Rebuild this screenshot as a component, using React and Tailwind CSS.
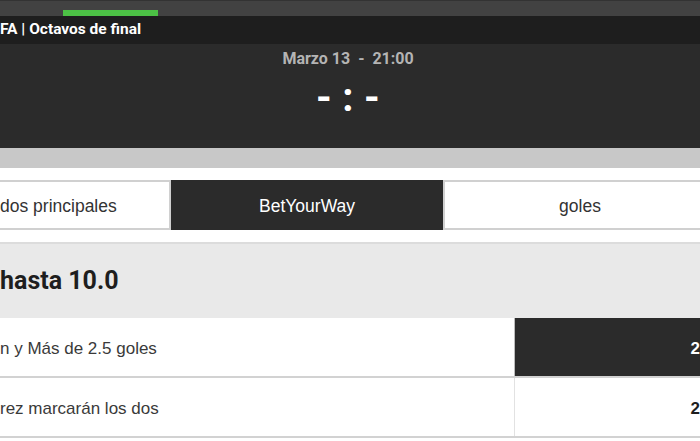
export default function App() {
  const rows = [
    { label: 'n y Más de 2.5 goles', odd: '2', active: true },
    { label: 'rez marcarán los dos', odd: '2', active: false },
  ];

  return (
    <div className="w-[700px] h-[441px] overflow-hidden bg-white font-['Liberation_Sans',Arial,sans-serif]">
      {/* barra superior */}
      <div className="h-4 bg-[#424242] border-t border-[#333]">
        <div className="ml-[63px] mt-[9px] h-[6px] w-[95px] bg-[#4cc145]" />
      </div>

      <div className="h-7 bg-[#1e1e1e] flex items-center font-['Roboto',sans-serif] font-bold text-[15.5px] text-white whitespace-nowrap">
        FA | Octavos de final
      </div>

      <div className="h-[104px] bg-[#2b2b2b] flex flex-col items-center pr-1 font-['Roboto',sans-serif] font-bold">
        <div className="mt-[3px] text-[16px] text-[#b4b4b4] whitespace-pre">Marzo 13  -  21:00</div>
        <div className="mt-[7px] flex text-[40px] leading-none text-white">
          <span className="w-6 text-center">-</span>
          <span className="w-6 text-center">:</span>
          <span className="w-6 text-center">-</span>
        </div>
      </div>

      <div className="h-5 bg-[#c8c8c8]" />

      {/* pestañas */}
      <div className="pt-3 pb-3 border-b-2 border-[#dcdcdc]">
        <div className="flex h-[50px] text-[17.5px] whitespace-nowrap">
          <div className="w-[171px] shrink-0 pt-0.5 border-y-2 border-r-2 border-[#d0d0d0] flex items-center text-[#333]">
            dos principales
          </div>
          <div className="w-[272px] shrink-0 pt-0.5 bg-[#2b2b2b] flex items-center justify-center text-white">
            BetYourWay
          </div>
          <div className="w-[272px] shrink-0 pt-0.5 border-y-2 border-l-2 border-[#d0d0d0] flex items-center justify-center text-[#333]">
            goles
          </div>
        </div>
      </div>

      <div className="h-[74px] bg-[#e9e9e9] flex items-center font-['Roboto',sans-serif] font-bold text-[25px] text-[#1e1e1e]">
        hasta 10.0
      </div>

      {rows.map((r) => (
        <div key={r.label} className="flex h-[60px] border-b-2 border-[#d2d2d2]">
          <div className="w-[515px] pt-[3px] flex items-center text-[17px] text-[#3a3a3a] whitespace-nowrap">
            {r.label}
          </div>
          <div
            className={`flex-1 pt-[3px] flex items-center pl-[176px] border-l font-bold text-[17px] whitespace-nowrap ${
              r.active ? 'bg-[#2b2b2b] text-white border-[#bcbcbc]' : 'bg-white text-[#1e1e1e] border-[#e2e2e2]'
            }`}
          >
            {r.odd}
          </div>
        </div>
      ))}
    </div>
  );
}
